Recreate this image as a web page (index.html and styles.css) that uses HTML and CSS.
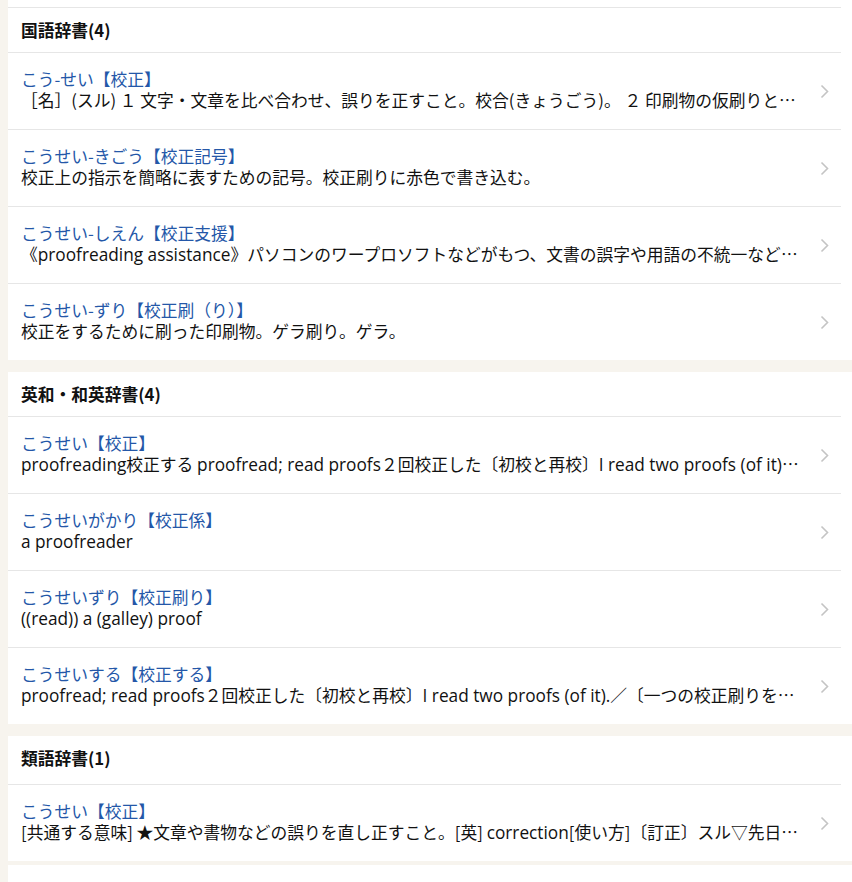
FILE: index.html
```html
<!DOCTYPE html>
<html lang="ja">
<head>
<meta charset="utf-8">
<title>校正 - 辞書検索結果</title>
<link rel="stylesheet" href="styles.css">
</head>
<body>
<div class="page">
  <div class="top-rest"></div>

  <section class="dict">
    <h2 class="dict-head">国語辞書(4)</h2>
    <ul class="entries">
      <li class="entry">
        <div class="entry-text">
          <div class="entry-title">こう-せい【校正】</div>
          <div class="entry-desc">［名］(スル) １ 文字・文章を比べ合わせ、誤りを正すこと。校合(きょうごう)。 ２ 印刷物の仮刷りと校正原稿とを照合し、誤りを正すこと。</div>
        </div>
        <svg class="chev" width="9" height="15" viewBox="0 0 9 15"><polyline points="1.5,1.5 7.5,7.5 1.5,13.5" fill="none" stroke="#c4c4c4" stroke-width="1.6"/></svg>
      </li>
      <li class="entry">
        <div class="entry-text">
          <div class="entry-title">こうせい-きごう【校正記号】</div>
          <div class="entry-desc">校正上の指示を簡略に表すための記号。校正刷りに赤色で書き込む。</div>
        </div>
        <svg class="chev" width="9" height="15" viewBox="0 0 9 15"><polyline points="1.5,1.5 7.5,7.5 1.5,13.5" fill="none" stroke="#c4c4c4" stroke-width="1.6"/></svg>
      </li>
      <li class="entry">
        <div class="entry-text">
          <div class="entry-title">こうせい-しえん【校正支援】</div>
          <div class="entry-desc">《<span class="lat">proofreading assistance</span>》パソコンのワープロソフトなどがもつ、文書の誤字や用語の不統一などを指摘する機能。</div>
        </div>
        <svg class="chev" width="9" height="15" viewBox="0 0 9 15"><polyline points="1.5,1.5 7.5,7.5 1.5,13.5" fill="none" stroke="#c4c4c4" stroke-width="1.6"/></svg>
      </li>
      <li class="entry">
        <div class="entry-text">
          <div class="entry-title">こうせい-ずり【校正刷（り）】</div>
          <div class="entry-desc">校正をするために刷った印刷物。ゲラ刷り。ゲラ。</div>
        </div>
        <svg class="chev" width="9" height="15" viewBox="0 0 9 15"><polyline points="1.5,1.5 7.5,7.5 1.5,13.5" fill="none" stroke="#c4c4c4" stroke-width="1.6"/></svg>
      </li>
    </ul>
  </section>

  <div class="band"></div>

  <section class="dict">
    <h2 class="dict-head">英和・和英辞書(4)</h2>
    <ul class="entries">
      <li class="entry">
        <div class="entry-text">
          <div class="entry-title">こうせい【校正】</div>
          <div class="entry-desc"><span class="lat">proofreading</span>校正する <span class="lat">proofread; read proofs</span>２回校正した〔初校と再校〕<span class="lat">I read two proofs (of it).</span>／〔一つの校正刷りを〕</div>
        </div>
        <svg class="chev" width="9" height="15" viewBox="0 0 9 15"><polyline points="1.5,1.5 7.5,7.5 1.5,13.5" fill="none" stroke="#c4c4c4" stroke-width="1.6"/></svg>
      </li>
      <li class="entry">
        <div class="entry-text">
          <div class="entry-title">こうせいがかり【校正係】</div>
          <div class="entry-desc"><span class="lat">a proofreader</span></div>
        </div>
        <svg class="chev" width="9" height="15" viewBox="0 0 9 15"><polyline points="1.5,1.5 7.5,7.5 1.5,13.5" fill="none" stroke="#c4c4c4" stroke-width="1.6"/></svg>
      </li>
      <li class="entry">
        <div class="entry-text">
          <div class="entry-title">こうせいずり【校正刷り】</div>
          <div class="entry-desc"><span class="lat">((read)) a (galley) proof</span></div>
        </div>
        <svg class="chev" width="9" height="15" viewBox="0 0 9 15"><polyline points="1.5,1.5 7.5,7.5 1.5,13.5" fill="none" stroke="#c4c4c4" stroke-width="1.6"/></svg>
      </li>
      <li class="entry">
        <div class="entry-text">
          <div class="entry-title">こうせいする【校正する】</div>
          <div class="entry-desc"><span class="lat">proofread; read proofs</span>２回校正した〔初校と再校〕<span class="lat">I read two proofs (of it).</span>／〔一つの校正刷りを二度〕<span class="lat">I read the proof twice.</span></div>
        </div>
        <svg class="chev" width="9" height="15" viewBox="0 0 9 15"><polyline points="1.5,1.5 7.5,7.5 1.5,13.5" fill="none" stroke="#c4c4c4" stroke-width="1.6"/></svg>
      </li>
    </ul>
  </section>

  <div class="band"></div>

  <section class="dict">
    <h2 class="dict-head dict-head--tall">類語辞書(1)</h2>
    <ul class="entries">
      <li class="entry">
        <div class="entry-text">
          <div class="entry-title">こうせい【校正】</div>
          <div class="entry-desc">[共通する意味] ★文章や書物などの誤りを直し正すこと。[英] <span class="lat">correction</span>[使い方]〔訂正〕スル▽先日の記事を訂正する</div>
        </div>
        <svg class="chev" width="9" height="15" viewBox="0 0 9 15"><polyline points="1.5,1.5 7.5,7.5 1.5,13.5" fill="none" stroke="#c4c4c4" stroke-width="1.6"/></svg>
      </li>
    </ul>
  </section>

  <div class="band band--end"></div>
</div>
</body>
</html>
```

FILE: styles.css
```css
html, body {
  margin: 0;
  padding: 0;
  background: #ffffff;
}

body {
  font-family: "Noto Sans CJK JP", "Noto Sans", sans-serif;
  font-size: 16.75px;
  color: #111111;
}

.lat {
  font-family: "Open Sans", "Noto Sans CJK JP", sans-serif;
  font-size: 17.25px;
}

.page {
  border-left: 8px solid #f7f4ee;
  min-height: 882px;
  box-sizing: border-box;
}

.top-rest {
  height: 7px;
  margin-right: 11px;
  border-bottom: 1px solid #e6e6e6;
}

.dict {
  background: #ffffff;
}

.dict-head {
  margin: 0 11px 0 0;
  height: 44px;
  padding: 0 0 0 13px;
  display: flex;
  align-items: center;
  font-size: 16.75px;
  font-weight: bold;
  color: #111111;
  border-bottom: 1px solid #e6e6e6;
}

.dict-head--tall {
  height: 49px;
  padding-bottom: 4px;
  box-sizing: border-box;
}

.entries {
  list-style: none;
  margin: 0;
  padding: 0;
}

.entry {
  display: flex;
  align-items: center;
  height: 76px;
  margin-right: 11px;
  padding: 0 0 0 13px;
  border-bottom: 1px solid #e6e6e6;
}

.entry:last-child {
  border-bottom: none;
}

.entry-text {
  flex: 1;
  min-width: 0;
  padding-bottom: 3px;
}

.entry-title,
.entry-desc {
  line-height: 21px;
  white-space: nowrap;
  overflow: hidden;
  text-overflow: ellipsis;
}

.entry-title {
  color: #2457a8;
}

.entry-desc {
  color: #111111;
}

.chev {
  flex: none;
  margin: 0 12px 0 20px;
}

.band {
  height: 12px;
  background: #f7f4ee;
}

.band--end {
  height: 4px;
}
```
